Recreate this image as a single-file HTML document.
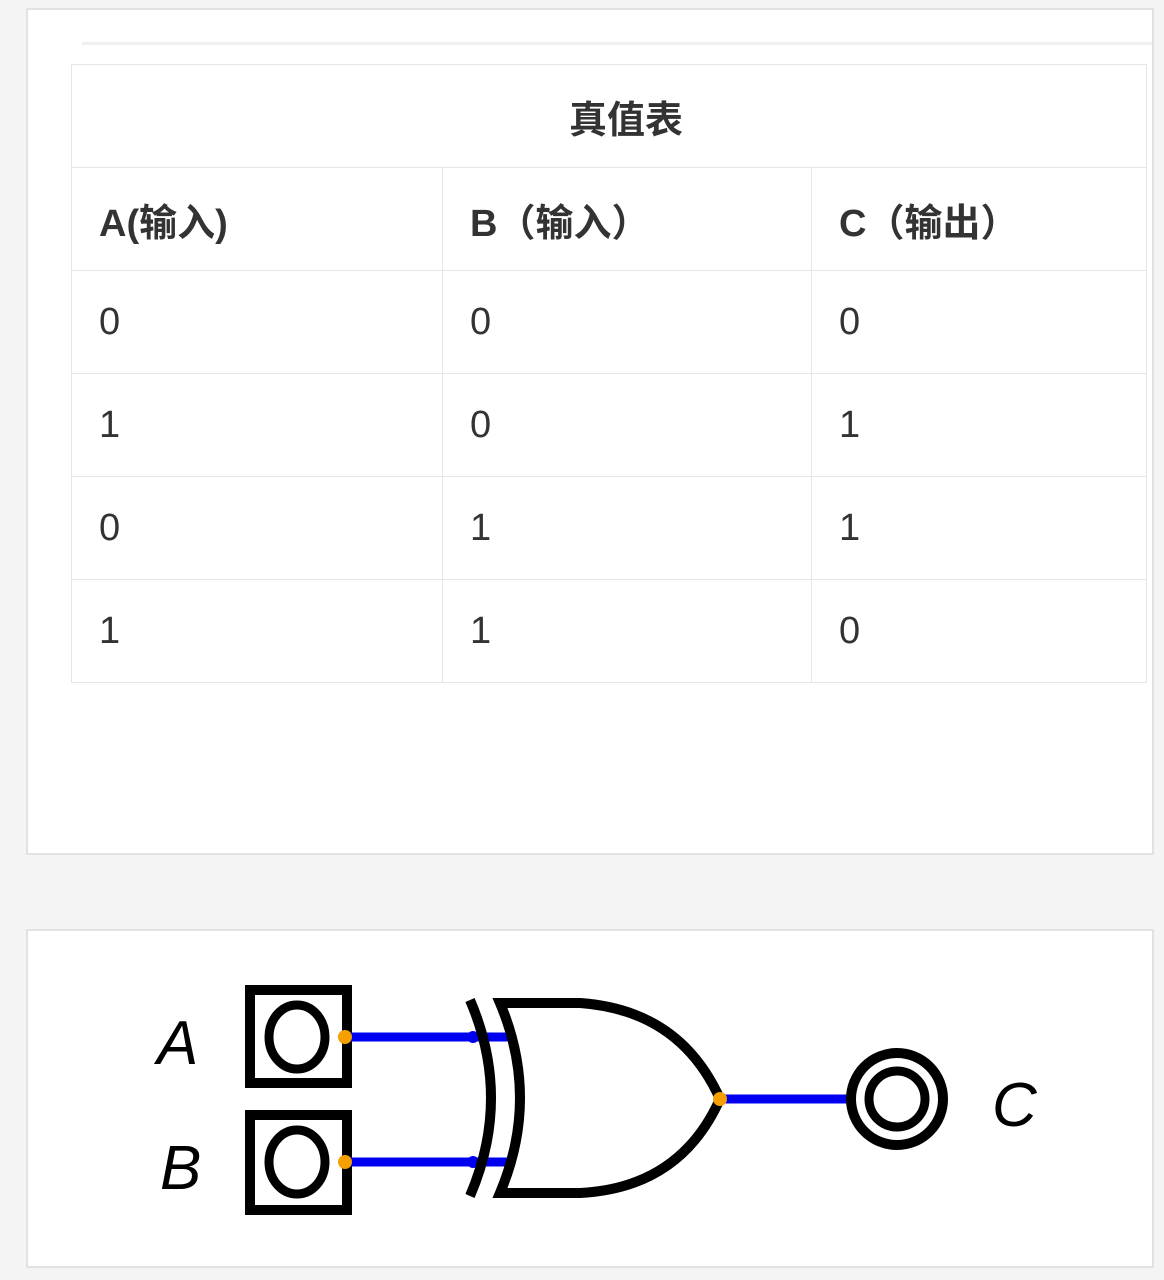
<!DOCTYPE html>
<html><head><meta charset="utf-8"><style>
body{margin:0;width:1164px;height:1280px;background:#f4f4f4;position:relative;overflow:hidden;font-family:"Liberation Sans","Noto Sans CJK SC",sans-serif;}
.card{position:absolute;left:26px;width:1124px;background:#fff;border:2px solid #e2e2e2;}
.line{position:absolute;left:82px;top:42px;width:1070px;height:3px;background:#f0f0f0;}
table{position:absolute;left:71px;top:64px;border-collapse:collapse;width:1076px;}
td,th{border:1.5px solid #e6e6e6;height:102px;padding:0 0 0 27px;font-size:38px;color:#333;text-align:left;}
th{font-weight:bold;}
td.c1,th.c1{width:343px}
td.c2,th.c2{width:341px}
.cap{text-align:center;font-weight:bold;font-size:38px;}
</style></head><body>
<div class="card" style="top:8px;height:843px;"></div>
<div class="line"></div>
<table>
<tr><th colspan="3" class="cap" style="padding-left:0;text-indent:34px">真值表</th></tr>
<tr><th class="c1">A(输入)</th><th class="c2">B（输入）</th><th>C（输出）</th></tr>
<tr><td class="c1">0</td><td class="c2">0</td><td>0</td></tr>
<tr><td class="c1">1</td><td class="c2">0</td><td>1</td></tr>
<tr><td class="c1">0</td><td class="c2">1</td><td>1</td></tr>
<tr><td class="c1">1</td><td class="c2">1</td><td>0</td></tr>
</table>
<div class="card" style="top:929px;height:335px;"></div>
<svg width="1164" height="1280" style="position:absolute;left:0;top:0">
<g fill="none" stroke="#000" stroke-width="10">
<rect x="250" y="990" width="97" height="93"/>
<rect x="250" y="1115" width="97" height="95"/>
<ellipse cx="297" cy="1037" rx="28" ry="32" stroke-width="9"/>
<ellipse cx="297" cy="1162" rx="28" ry="32" stroke-width="9"/>
</g>
<g stroke="#0000f0" stroke-width="9">
<line x1="345" y1="1037" x2="515" y2="1037"/>
<line x1="345" y1="1162" x2="515" y2="1162"/>
<line x1="720" y1="1099" x2="850" y2="1099"/>
</g>
<circle cx="473" cy="1037" r="6" fill="#0000f0"/>
<circle cx="473" cy="1162" r="6" fill="#0000f0"/>
<circle cx="850" cy="1099" r="6" fill="#0000f0"/>
<g fill="none" stroke="#000" stroke-width="10">
<path d="M470 1000 Q512 1098 470 1196"/>
<path d="M500 1003 L580 1003 Q680 1010 720 1099 Q680 1188 580 1193 L500 1193 Q540 1098 500 1003 Z"/>
<circle cx="897" cy="1099" r="46"/>
<circle cx="897" cy="1099" r="28" stroke-width="9"/>
</g>
<g fill="#f5a000">
<circle cx="345" cy="1037" r="7"/><circle cx="345" cy="1162" r="7"/><circle cx="720" cy="1099" r="7"/>
</g>
<g font-family="Liberation Sans" font-style="italic" font-size="62" fill="#000">
<text x="157" y="1064">A</text><text x="160" y="1189">B</text><text x="992" y="1126">C</text>
</g>
</svg>
</body></html>
